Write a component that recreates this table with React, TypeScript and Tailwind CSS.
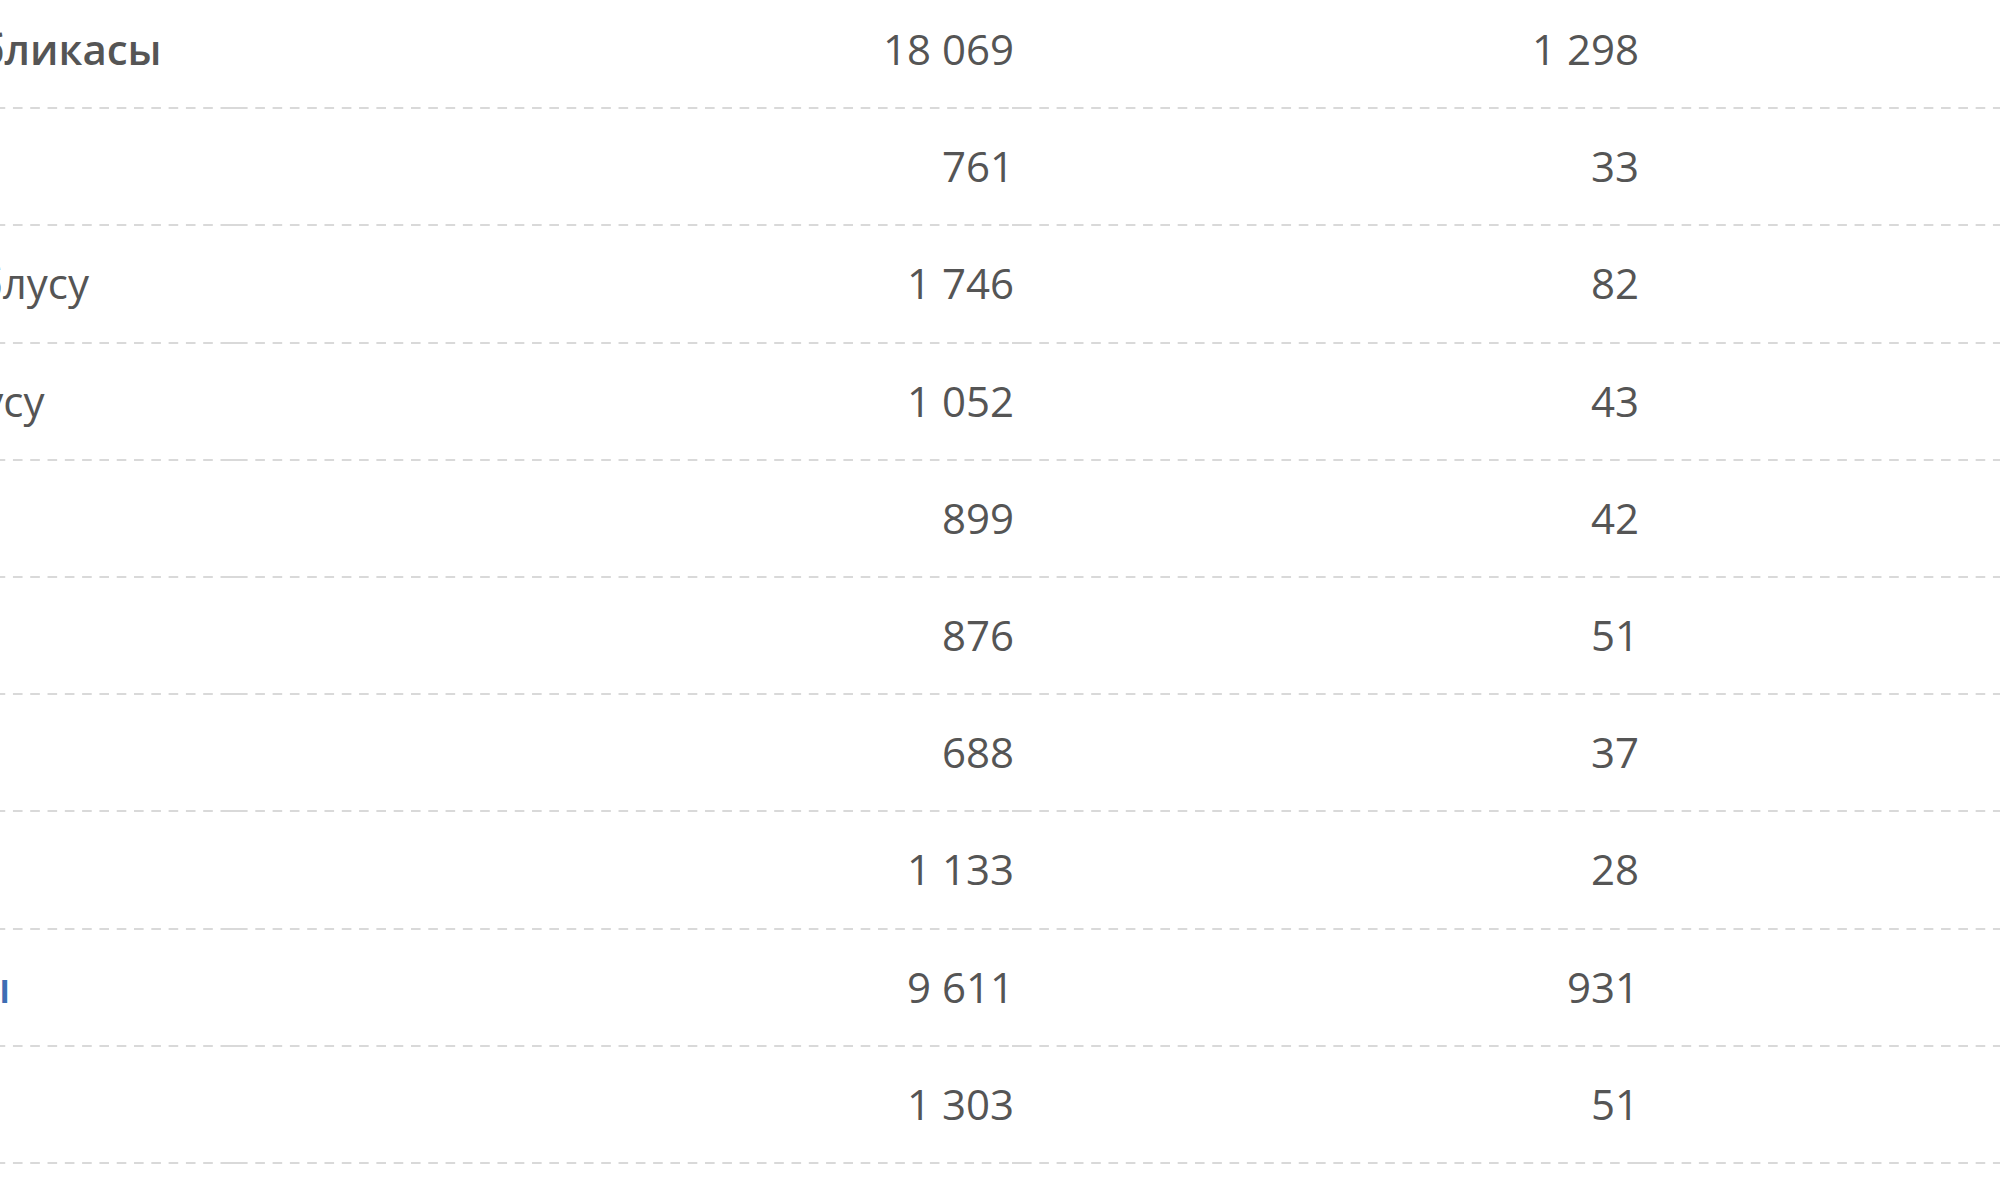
const rows = [
  { name: "Кыргыз Республикасы", a: "18 069", b: "1 298", top: true },
  { name: "Баткен облусу", a: "761", b: "33" },
  { name: "Жалал-Абад облусу", a: "1 746", b: "82" },
  { name: "Ысык-Көл облусу", a: "1 052", b: "43" },
  { name: "Нарын облусу", a: "899", b: "42" },
  { name: "Ош облусу", a: "876", b: "51" },
  { name: "Талас облусу", a: "688", b: "37" },
  { name: "Чүй облусу", a: "1 133", b: "28" },
  { name: "Бишкек шаары", a: "9 611", b: "931", city: true },
  { name: "Ош шаары", a: "1 303", b: "51" },
];

// dashed bottom border, each cell starts and ends with a dash
const dashed =
  "[background-image:linear-gradient(to_right,#d9d9d9_10px,transparent_10px),linear-gradient(#d9d9d9,#d9d9d9)] [background-size:17.3px_2px,10px_2px] [background-position:left_bottom,right_bottom] [background-repeat:repeat-x,no-repeat]";

export default function App() {
  return (
    <div className="h-[1199px] w-[2000px] overflow-hidden bg-white font-['Open_Sans',sans-serif] text-[42px] text-[#555]">
      <div className="ml-[-333px] mt-[-8px]">
        {rows.map((r) => {
          const bold = r.top || r.city;
          return (
            <div key={r.name} className="flex h-[117.2px]">
              <div
                className={`flex w-[571px] shrink-0 items-center pb-[4px] ${bold ? "pl-[19px]" : "pl-[32px]"} ${dashed}`}
              >
                <span
                  className={`whitespace-nowrap ${bold ? "font-semibold" : ""} ${r.city ? "text-[#3d6db3]" : ""}`}
                >
                  {r.name}
                </span>
              </div>
              <div className={`flex w-[784px] shrink-0 items-center justify-end pb-[4px] pr-[8px] ${dashed}`}>
                {r.a}
              </div>
              <div className={`flex w-[625px] shrink-0 items-center justify-end pb-[4px] pr-[8px] ${dashed}`}>
                {r.b}
              </div>
              <div className={`w-[420px] shrink-0 ${dashed}`} />
            </div>
          );
        })}
      </div>
    </div>
  );
}
